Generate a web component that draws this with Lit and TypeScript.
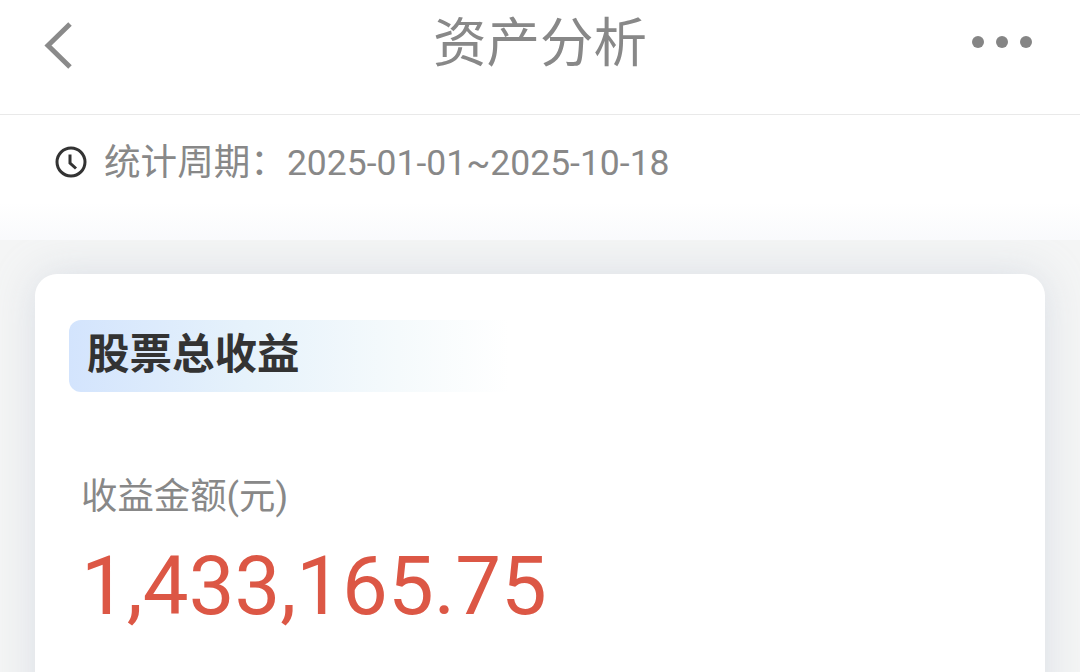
import { LitElement, html, css } from 'lit';
import { customElement } from 'lit/decorators.js';

const FULL_COLON = '\uFF1A';

@customElement('app-root')
export class AppRoot extends LitElement {
  static styles = css`
    :host {
      display: block;
      width: 1080px;
      height: 672px;
      overflow: hidden;
      background: #fff;
      font-family: Roboto, 'Noto Sans CJK SC', sans-serif;
    }

    .header {
      height: 114px;
      border-bottom: 1px solid #e9e9e9;
      display: grid;
      grid-template-columns: 1fr auto 1fr;
      align-items: center;
      padding: 0 47px 0 44px;
    }

    .back {
      width: 30px;
      height: 48px;
      display: block;
      margin-top: -24px;
    }

    .title {
      margin: -26px 0 0 0;
      font-size: 53.5px;
      line-height: 60px;
      color: #888;
      transform: translateX(1.5px);
    }

    .more {
      display: flex;
      gap: 11.5px;
      justify-content: flex-end;
      margin: -30px 1px 0 0;
    }

    .more span {
      width: 12.5px;
      height: 12.5px;
      border-radius: 50%;
      background: #858585;
    }

    .period {
      height: 125px;
      box-sizing: border-box;
      padding: 26px 0 0 55px;
      display: flex;
      align-items: flex-start;
      gap: 17px;
      background: linear-gradient(#fff 70%, #f9fafc 100%);
      font-size: 36.6px;
      line-height: 44px;
      color: #888;
    }

    .dates {
      font-size: 35.5px;
    }

    .clock {
      width: 32px;
      height: 32px;
      margin-top: 5px;
      display: block;
    }

    .body {
      height: 432px;
      overflow: hidden;
      background: #f4f5f5;
      padding: 34px 35px 0;
    }

    .card {
      background: #fff;
      border-radius: 22px;
      box-shadow: 0 0 40px rgba(206, 212, 222, 0.7);
      height: 600px;
      padding: 46px 34px 0;
    }

    .badge {
      width: 440px;
      height: 72px;
      box-sizing: border-box;
      padding-left: 18px;
      border-radius: 12px 0 0 12px;
      background: linear-gradient(90deg, #d3e4fd 0%, #e6f2fb 40%, #f5fafc 75%, #ffffff 100%);
      font-size: 42.5px;
      line-height: 70px;
      font-weight: 700;
      color: #333;
    }

    .label {
      margin: 80px 0 0 12px;
      font-size: 36.4px;
      line-height: 50px;
      color: #888;
    }

    .amount {
      margin: 14px 0 0 12px;
      font-size: 81.5px;
      line-height: 100px;
      color: #dc5745;
    }
  `;

  render() {
    return html`
      <div class="header">
        <svg class="back" viewBox="0 0 30 48">
          <path d="M26 3 L4 24.5 L26 46" fill="none" stroke="#8a8a8a" stroke-width="5" />
        </svg>
        <div class="title">资产分析</div>
        <div class="more"><span></span><span></span><span></span></div>
      </div>
      <div class="period">
        <svg class="clock" viewBox="0 0 32 32">
          <circle cx="16" cy="16" r="14" fill="none" stroke="#333" stroke-width="3" />
          <path d="M15 8.5 V17 L21 22.5" fill="none" stroke="#333" stroke-width="3" />
        </svg>
        <span>统计周期${FULL_COLON}<span class="dates">2025-01-01~2025-10-18</span></span>
      </div>
      <div class="body">
        <div class="card">
          <div class="badge">股票总收益</div>
          <div class="label">收益金额(元)</div>
          <div class="amount">1,433,165.75</div>
        </div>
      </div>
    `;
  }
}
